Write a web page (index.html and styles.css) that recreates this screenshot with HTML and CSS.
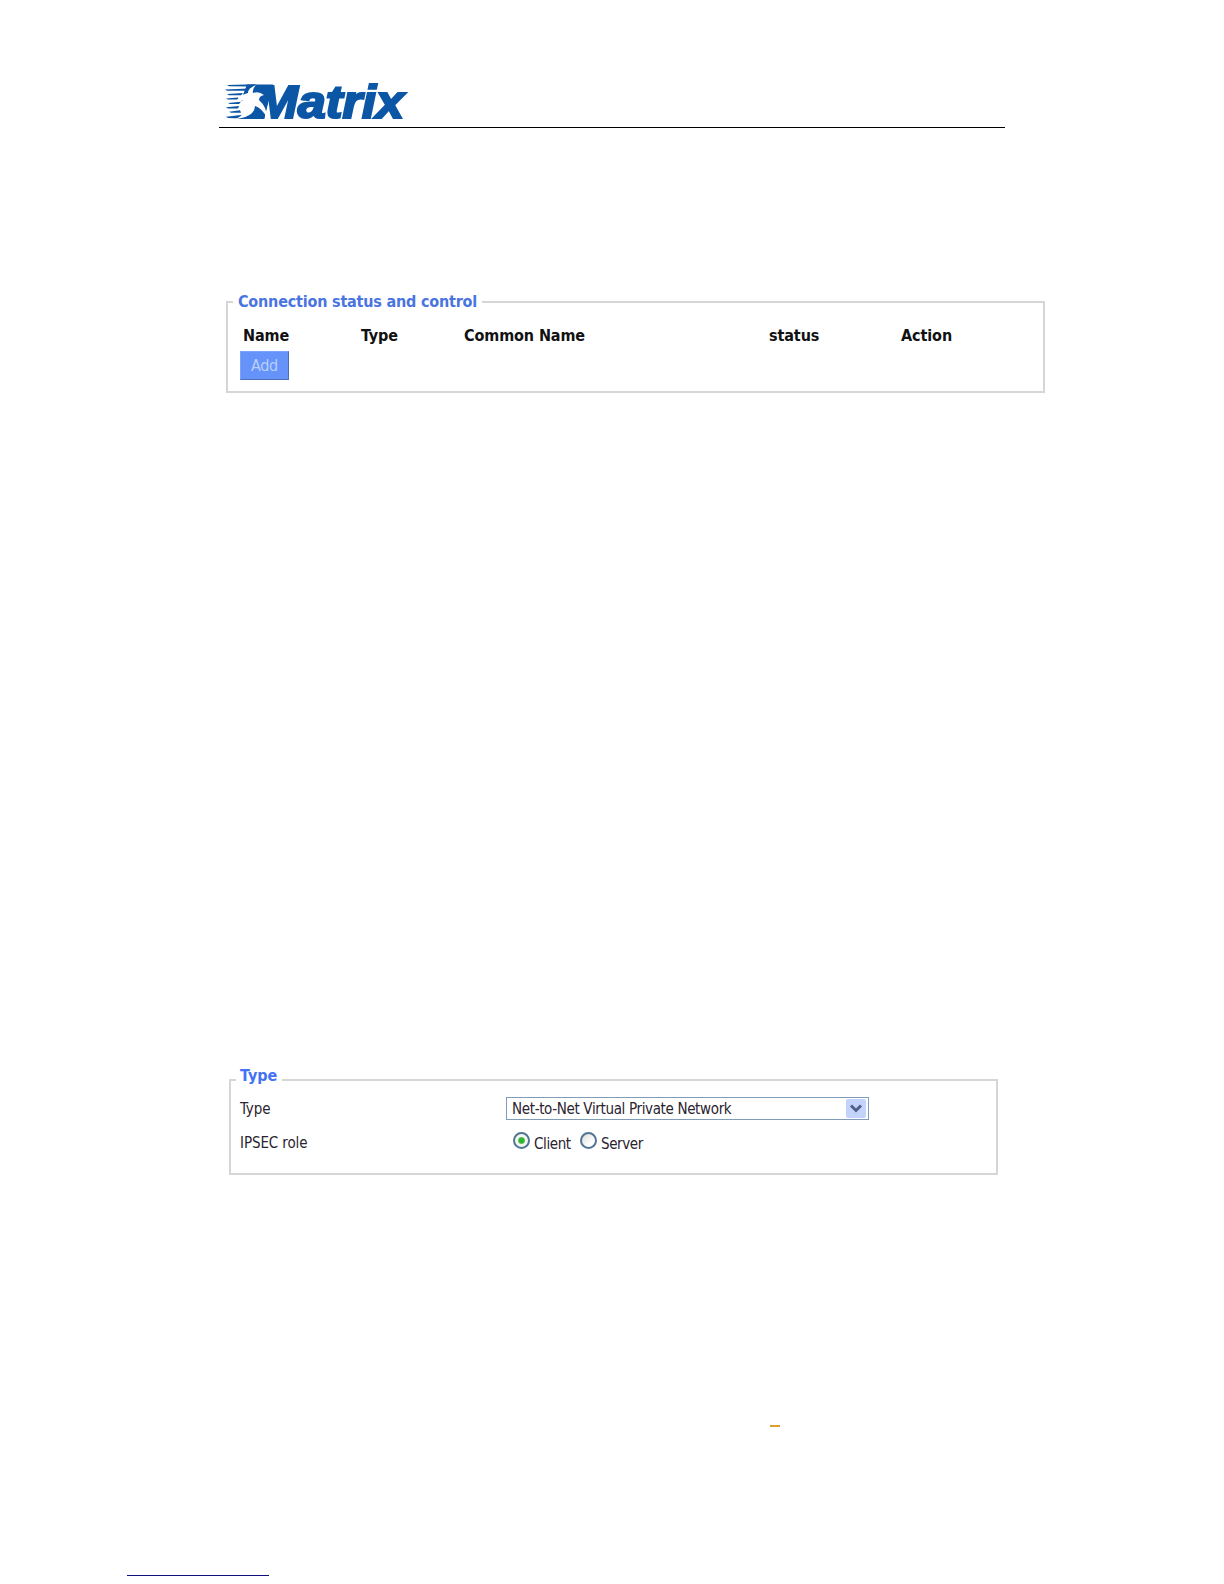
FILE: index.html
```
<!DOCTYPE html>
<html lang="en">
<head>
  <meta charset="UTF-8">
  <title>Matrix - VPN Connections</title>
  <meta name="viewport" content="width=device-width, initial-scale=1.0">
  <link rel="stylesheet" href="styles.css">
</head>
<body>

  <header>
    <svg class="logo" width="210" height="48" viewBox="0 0 210 48">
      <g class="logo-blue">
        <path d="M26 6.5 L52 6.5 L43 41 L17 41 L31 30 L20 22 Z"/>
        <path d="M6 7 L36 6.3 L29 8.5 L8 8.3 Z"/>
        <path d="M4 11.5 L28 10.5 L25 12.8 L6 12.7 Z"/>
        <path d="M6 16 L22 15 L20 17.3 L8 17.2 Z"/>
        <path d="M5 20.4 L17 19.6 L18 21.6 L7 21.6 Z"/>
        <path d="M7 25 L20 23.8 L18 26 L9 26 Z"/>
        <path d="M5 29.3 L18 28 L17 30.4 L7 30.4 Z"/>
        <path d="M8 33.7 L19 32.3 L20 34.8 L10 34.8 Z"/>
        <path d="M5 38.8 L24 36.5 L19 40.5 L7 40 Z"/>
      </g>
      <text class="logo-text" x="35" y="39.5" textLength="148" lengthAdjust="spacingAndGlyphs">Matrix</text>
      <path class="bird" d="M35 7 Q27 10 27 15 Q19 17 15 23 Q20 21 22 23 Q15 31 22 34 Q22 38 14 41 Q26 40 31 35 Q34 32 34 28 Q41 30 46 40 Q46 29 38 22 Q38 18 43 17 Q38 13 32 15 Q31 11 35 7 Z"/>
    </svg>
  </header>

  <main>
    <fieldset class="connections">
      <legend>Connection status and control</legend>
      <div class="columns">
        <span>Name</span>
        <span>Type</span>
        <span>Common Name</span>
        <span>status</span>
        <span>Action</span>
      </div>
      <button class="add" type="button">Add</button>
    </fieldset>

    <fieldset class="type">
      <legend>Type</legend>
      <div class="row">
        <span class="label">Type</span>
        <div class="select">
          <span>Net-to-Net Virtual Private Network</span>
          <svg class="arrow" width="20" height="19" viewBox="0 0 20 19">
            <rect width="20" height="19" rx="2"/>
            <path d="M5 6.5 L10 11.5 L15 6.5"/>
          </svg>
        </div>
      </div>
      <div class="row roles">
        <span class="label">IPSEC role</span>
        <label class="client"><i class="radio checked"></i><span>Client</span></label>
        <label class="server"><i class="radio"></i><span>Server</span></label>
      </div>
    </fieldset>
  </main>

  <div class="dash"></div>
  <footer></footer>

</body>
</html>
```
FILE: styles.css
```
:root {
  --blue: #4a74e0;
  --logo: #0b56a5;
  --line: #d6d6d6;
}

* {
  box-sizing: border-box;
}

body {
  margin: 0;
  height: 1584px;
  overflow: hidden;
  background: #fff;
  color: #2a2430;
  font-family: "DejaVu Sans Condensed", "DejaVu Sans", sans-serif;
  font-size: 15px;
}

header {
  width: 786px;
  height: 128px;
  margin-left: 219px;
  padding-top: 78px;
  border-bottom: 1px solid #000;
}

.logo {
  display: block;
  margin-left: 2px;
  overflow: visible;
}

.logo-blue,
.logo-text {
  fill: var(--logo);
}

.logo-text {
  font: italic bold 46px "Liberation Sans", sans-serif;
  stroke: var(--logo);
  stroke-width: 2.2px;
}

.bird {
  fill: #fff;
}

fieldset {
  min-width: 0;
  padding: 0;
  border: 2px solid var(--line);
}

legend {
  height: 22px;
  margin-left: 5px;
  padding: 0 5px;
  color: var(--blue);
  font-weight: bold;
  font-size: 16px;
  line-height: 22px;
  white-space: nowrap;
}

.connections {
  width: 819px;
  height: 102px;
  margin: 163px 0 0 226px;
}

.connections legend {
  width: 249px;
  letter-spacing: -0.2px;
}

.columns {
  display: grid;
  grid-template-columns: 118px 103px 305px 132px 1fr;
  margin: 12px 0 0 15px;
  color: #111;
  font-weight: bold;
  font-size: 16px;
  letter-spacing: -0.1px;
  line-height: 22px;
}

.add {
  display: block;
  width: 49px;
  height: 29px;
  margin: 4px 0 0 12px;
  padding: 0;
  border: 1px solid;
  border-color: #7ba2f8 #4e6fb5 #4e6fb5 #7ba2f8;
  background: #6593fa;
  color: #b9cffc;
  font: 16px "DejaVu Sans Condensed", sans-serif;
  letter-spacing: -0.3px;
}

.type {
  width: 769px;
  height: 106px;
  margin: 676px 0 0 229px;
}

.type legend {
  width: 46px;
  padding-left: 4px;
  color: #4472f5;
  line-height: 13px;
}

.row {
  display: flex;
  align-items: center;
  height: 22px;
  margin: 6px 0 0 9px;
}

.label {
  width: 266px;
  padding-top: 1px;
  letter-spacing: -0.1px;
}

.select {
  display: flex;
  align-items: center;
  justify-content: space-between;
  width: 363px;
  height: 23px;
  padding: 0 2px 0 5px;
  border: 1px solid #7f9db9;
  letter-spacing: -0.35px;
  white-space: nowrap;
}

.select span {
  padding-top: 1px;
}

.arrow rect {
  fill: #c3d3fb;
}

.arrow path {
  fill: none;
  stroke: #4d6185;
  stroke-width: 3;
}

.roles {
  margin-top: 12px;
}

.row label {
  display: flex;
  align-items: center;
  height: 22px;
  margin-top: -4px;
  letter-spacing: -0.4px;
}

.row label span {
  margin-top: 7px;
}

.client {
  width: 67px;
  margin-left: 7px;
}

.radio {
  width: 17px;
  height: 17px;
  margin-right: 4px;
  border: 2px solid #527596;
  border-radius: 50%;
  background: linear-gradient(135deg, #dcdcd8, #fff 70%);
}

.checked {
  background: radial-gradient(circle, #2fb52f 0 2.5px, #58c358 3px, #f4f6f2 4px);
}

.dash {
  width: 10px;
  height: 2px;
  margin: 250px 0 0 770px;
  background: #d9a02c;
}

footer {
  width: 142px;
  height: 1px;
  margin: 148px 0 0 127px;
  background: #10107a;
}
```
